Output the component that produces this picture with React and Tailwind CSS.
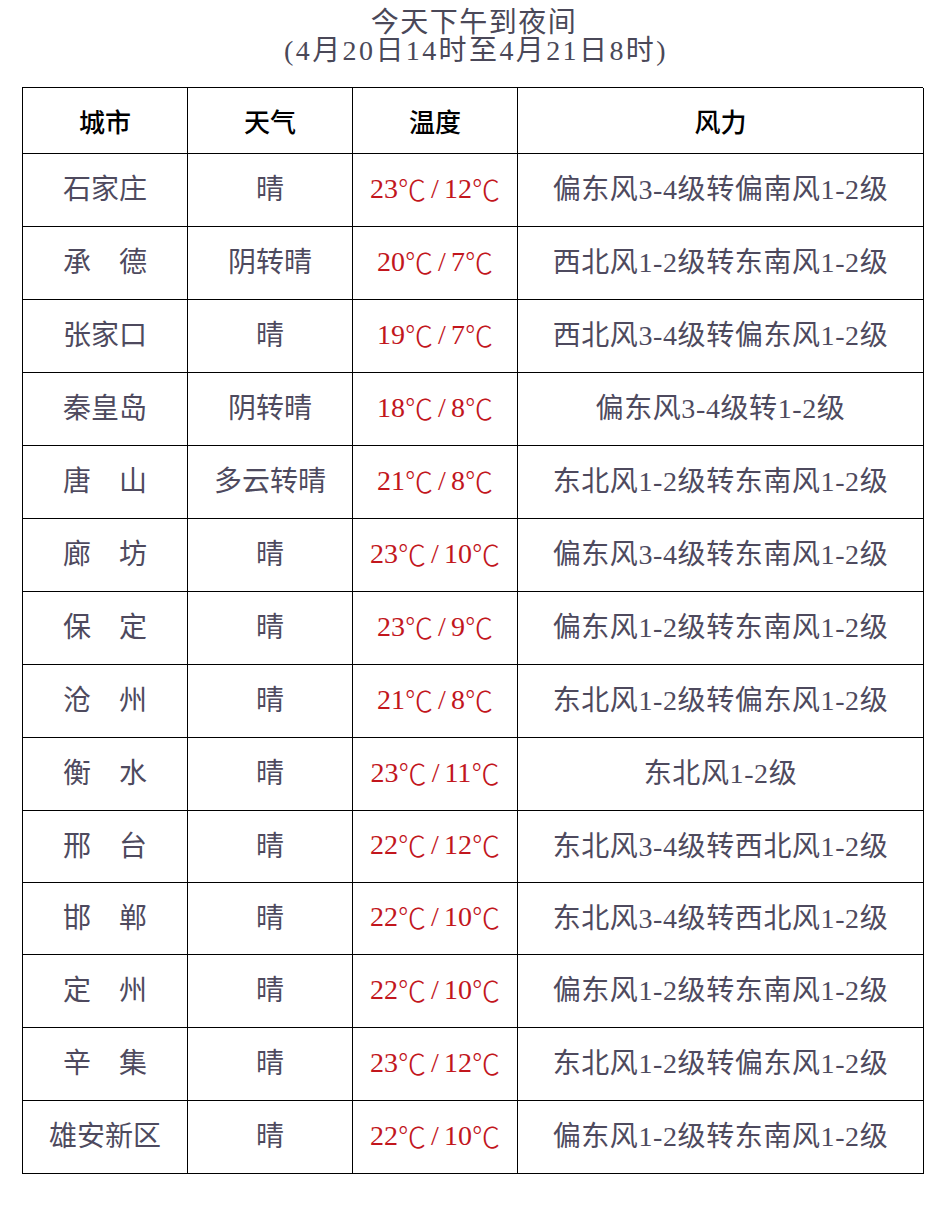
import React from "react";

const rows = [
  ["石家庄", "晴", ["23", "12"], "偏东风3-4级转偏南风1-2级"],
  ["承　德", "阴转晴", ["20", "7"], "西北风1-2级转东南风1-2级"],
  ["张家口", "晴", ["19", "7"], "西北风3-4级转偏东风1-2级"],
  ["秦皇岛", "阴转晴", ["18", "8"], "偏东风3-4级转1-2级"],
  ["唐　山", "多云转晴", ["21", "8"], "东北风1-2级转东南风1-2级"],
  ["廊　坊", "晴", ["23", "10"], "偏东风3-4级转东南风1-2级"],
  ["保　定", "晴", ["23", "9"], "偏东风1-2级转东南风1-2级"],
  ["沧　州", "晴", ["21", "8"], "东北风1-2级转偏东风1-2级"],
  ["衡　水", "晴", ["23", "11"], "东北风1-2级"],
  ["邢　台", "晴", ["22", "12"], "东北风3-4级转西北风1-2级"],
  ["邯　郸", "晴", ["22", "10"], "东北风3-4级转西北风1-2级"],
  ["定　州", "晴", ["22", "10"], "偏东风1-2级转东南风1-2级"],
  ["辛　集", "晴", ["23", "12"], "东北风1-2级转偏东风1-2级"],
  ["雄安新区", "晴", ["22", "10"], "偏东风1-2级转东南风1-2级"],
];

const font = {
  fontFamily: '"Liberation Serif", "Noto Sans CJK SC", serif',
};

const Deg = () => (
  <span style={{ fontFamily: '"Noto Sans CJK SC", sans-serif' }} className="font-light">
    ℃
  </span>
);

export default function App() {
  return (
    <div className="w-[942px] min-h-[1218px] bg-white pt-[9px]" style={font}>
      {/* 标题 */}
      <div className="text-center text-[#4a4858] text-[28px] leading-[28px]">
        <div className="tracking-[1.5px] pl-[6px]">今天下午到夜间</div>
        <div className="tracking-[2.4px] pl-[10px]">(4月20日14时至4月21日8时)</div>
      </div>

      {/* 表格 */}
      <div className="ml-[22px] mt-[22px] w-[901px] border-l border-t border-black grid grid-cols-[165px_165px_165px_406px]">
        {["城市", "天气", "温度", "风力"].map((h) => (
          <div
            key={h}
            className="h-[66px] pt-[5px] border-r border-b border-black flex items-center justify-center text-[26px] text-black font-medium"
          >
            {h}
          </div>
        ))}
        {rows.map((r, i) => {
          const h = i === 9 || i === 10 ? "h-[72px]" : "h-[73px]";
          const cell = h + " border-r border-b border-black flex items-center justify-center text-[28px] whitespace-nowrap";
          return (
            <React.Fragment key={i}>
              <div className={cell + " text-[#4e4a5e]"}>{r[0]}</div>
              <div className={cell + " text-[#4e4a5e]"}>{r[1]}</div>
              <div className={cell + " text-[#c2161d] pb-[3px]"}>
                {r[2][0]}
                <Deg />
                <span className="mx-[5px]">/</span>
                {r[2][1]}
                <Deg />
              </div>
              <div className={cell + " text-[#4e4a5e] tracking-[0.6px]"}>{r[3]}</div>
            </React.Fragment>
          );
        })}
      </div>
    </div>
  );
}
